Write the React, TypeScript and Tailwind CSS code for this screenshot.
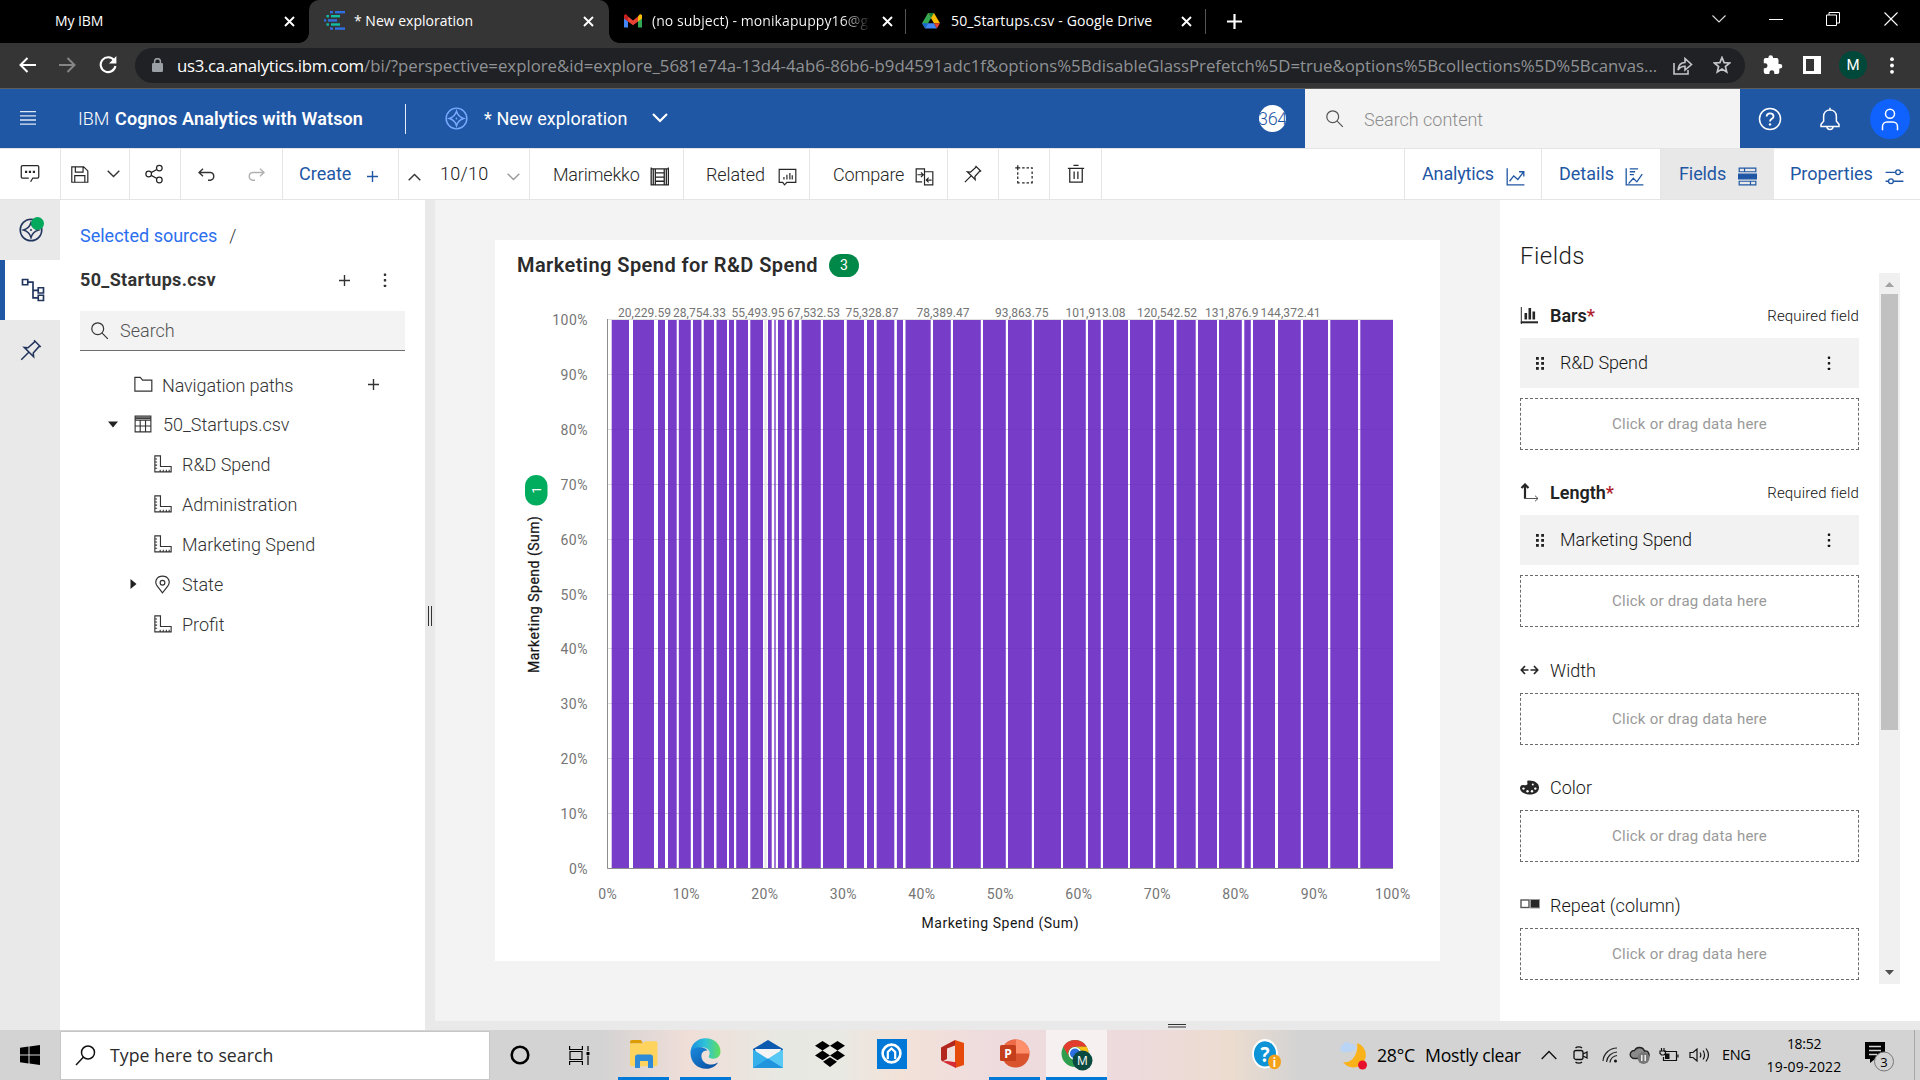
import type { ReactNode } from 'react';

type IconProps = { className?: string; size?: number; sw?: number; children: ReactNode };

function Icon({ className = '', size = 20, sw = 2, children }: IconProps) {
  return (
    <svg
      width={size}
      height={size}
      viewBox="0 0 32 32"
      fill="none"
      stroke="currentColor"
      strokeWidth={sw}
      className={`shrink-0 ${className}`}
    >
      {children}
    </svg>
  );
}

const CloseX = ({ className = '' }: { className?: string }) => (
  <svg width="11" height="11" viewBox="0 0 11 11" className={`shrink-0 ${className}`}>
    <path d="M1 1l9 9M10 1l-9 9" stroke="#fff" strokeWidth="1.9" />
  </svg>
);

const DiamondCircle = ({ size, sw = 2 }: { size: number; sw?: number }) => (
  <Icon size={size} sw={sw}>
    <circle cx="16" cy="16" r="14.4" />
    <path d="M16 6c1.6 5.6 4.4 8.400 10 10-5.600 1.600-8.400 4.400-10 10-1.600-5.600-4.400-8.400-10-10 5.600-1.600 8.400-4.400 10-10z" />
    <circle cx="16" cy="16" r="1.300" fill="currentColor" stroke="none" />
  </Icon>
);

const PinIcon = ({ size }: { size: number }) => (
  <Icon size={size}>
    <path d="M20 3l9 9M21.500 4.500L12 13l-5-.5 12.500 12.500-.5-5 8.500-9.500M7 12.500l12.500 12.500M13 19L3 29" />
  </Icon>
);

const SearchIcon = ({ size, sw = 2 }: { size: number; sw?: number }) => (
  <Icon size={size} sw={sw}>
    <circle cx="13" cy="13" r="10" />
    <path d="M20.500 20.500l9.500 9.500" />
  </Icon>
);

const Plus = ({ size = 11, sw = 1.3, className = '' }: { size?: number; sw?: number; className?: string }) => (
  <svg width={size} height={size} viewBox="0 0 11 11" className={`shrink-0 ${className}`}>
    <path d="M5.500 0v11M0 5.500h11" stroke="currentColor" strokeWidth={sw} />
  </svg>
);

const Dots = ({ className = '', r = 1.2 }: { className?: string; r?: number }) => (
  <svg width="4" height="14" viewBox="0 0 4 14" fill="currentColor" className={`shrink-0 ${className}`}>
    <rect x={2 - r} y={1.7 - r} width={2 * r} height={2 * r} rx=".6" />
    <rect x={2 - r} y={7.300 - r} width={2 * r} height={2 * r} rx=".6" />
    <rect x={2 - r} y={12.900 - r} width={2 * r} height={2 * r} rx=".6" />
  </svg>
);

function CognosFavicon() {
  return (
    <svg width="21" height="19" viewBox="0 0 21 19" className="shrink-0 -translate-y-px">
      <g fill="#2f6fe0">
        <rect x="6" y="0" width="3" height="2.400" /><rect x="11" y="0" width="10" height="2.400" />
        <rect x="0" y="8.200" width="2.200" height="2.400" /><rect x="4" y="8.200" width="9" height="2.400" />
        <rect x="6" y="16.400" width="3" height="2.400" /><rect x="11" y="16.400" width="10" height="2.400" />
      </g>
      <g fill="#10bfa6">
        <rect x="2.500" y="4" width="2.400" height="2.400" /><rect x="7" y="4" width="9" height="2.400" />
        <rect x="2.500" y="12.300" width="2.400" height="2.400" /><rect x="7" y="12.300" width="9" height="2.400" />
      </g>
    </svg>
  );
}

function Tabs() {
  return (
    <div className="flex h-[43px] bg-black font-['Open_Sans',sans-serif] text-[14px] leading-[40px] text-white">
      <div className="flex w-[309px] shrink-0 items-center pb-px pl-[55px]">
        <span className="w-[229px] tracking-[-0.1px]">My IBM</span>
        <CloseX />
      </div>
      <div className="relative flex w-[300px] shrink-0 items-center rounded-t-[10px] bg-[#353535] pb-px pl-[15px]">
        <div className="absolute bottom-0 left-[-10px] size-[10px] bg-[radial-gradient(circle_at_0_0,#000_9.5px,#353535_10px)]" />
        <div className="absolute right-[-10px] bottom-0 size-[10px] bg-[radial-gradient(circle_at_100%_0,#000_9.5px,#353535_10px)]" />
        <CognosFavicon />
        <span className="ml-[9px] w-[229px]">* New exploration</span>
        <CloseX />
      </div>
      <div className="flex w-[299px] shrink-0 items-center pb-px pl-[15px]">
        <svg width="18" height="14" viewBox="0 0 18 14" className="shrink-0">
          <path d="M0 2v11.500h4V5z" fill="#4285f4" />
          <path d="M14 5v8.500h4V2z" fill="#34a853" />
          <path d="M0 2v2.600l4 3V2.600L2.500.5A1.600 1.600 0 000 2z" fill="#c5221f" />
          <path d="M14 2.600v5l4-3V2A1.600 1.600 0 0015.500.5z" fill="#fbbc04" />
          <path d="M4 2.600v5l5 3.700 5-3.700v-5L9 6.400z" fill="#ea4335" />
        </svg>
        <span className="ml-[10px] w-[221px] overflow-hidden bg-[linear-gradient(90deg,#fff_86%,#0000_99%)] bg-clip-text tracking-[0.08px] whitespace-nowrap text-transparent">
          (no subject) - monikapuppy16@g
        </span>
        <CloseX className="ml-[9px]" />
        <div className="ml-[12px] h-[25px] w-px bg-[#555]" />
      </div>
      <div className="flex w-[299px] shrink-0 items-center pb-px pl-[14px]">
        <svg width="18" height="16" viewBox="0 0 18 16" className="shrink-0">
          <path d="M6 0h6L6.200 10 3.200 15.600 0 10.300z" fill="#34a853" />
          <path d="M6 0h6l6 10.300h-6z" fill="#fbbc04" />
          <path d="M6 0h6L9 5z" fill="#188038" />
          <path d="M0 10.300h6l-2.800 5.300z" fill="#1967d2" />
          <path d="M6 10.300h6l2.900 5.300H3.200z" fill="#4285f4" />
          <path d="M12 10.300h6l-3.100 5.300z" fill="#ea4335" />
        </svg>
        <span className="ml-[11px] w-[230px] tracking-[0.15px] whitespace-nowrap">50_Startups.csv - Google Drive</span>
        <CloseX />
        <div className="ml-[13px] h-[25px] w-px bg-[#555]" />
      </div>
      <Plus size={15} sw={1.6} className="mt-[14px] ml-[20px]" />
      <div className="mt-[12px] ml-auto flex h-[14px] items-center">
        <svg width="14" height="8" viewBox="0 0 14 8" className="mr-[43px]">
          <path d="M.5.5L7 7l6.500-6.500" fill="none" stroke="#ddd" strokeWidth="1.100" />
        </svg>
        <div className="mr-[43px] h-px w-[14px] bg-white" />
        <svg width="14" height="14" viewBox="0 0 14 14" className="mr-[44px]" fill="none" stroke="#fff">
          <path d="M.5 3h10v10.500H.5zM3 3V.5h10.500v10.500h-3" />
        </svg>
        <svg width="14" height="14" viewBox="0 0 14 14" className="mr-[22px]">
          <path d="M.5.5l13 13M13.500.5l-13 13" stroke="#fff" strokeWidth="1.100" />
        </svg>
      </div>
    </div>
  );
}

function AddressBar() {
  return (
    <div className="flex h-[46px] items-center border-b border-[#5c5c5c] bg-[#353535] pb-[1px]">
      <svg width="17" height="16" viewBox="0 0 17 16" className="ml-[19px] shrink-0">
        <path d="M17 8H2M8.500 1L1.500 8l7 7" fill="none" stroke="#fff" strokeWidth="2" />
      </svg>
      <svg width="17" height="16" viewBox="0 0 17 16" className="ml-[23px] shrink-0">
        <path d="M0 8h15M8.500 1l7 7-7 7" fill="none" stroke="#868686" strokeWidth="2" />
      </svg>
      <svg width="18" height="18" viewBox="0 0 18 18" className="ml-[23px] shrink-0">
        <path d="M15.200 4.500A7.400 7.400 0 1016.400 10" fill="none" stroke="#fff" strokeWidth="2.100" />
        <path d="M17.400 0v7.400H10z" fill="#fff" />
      </svg>
      <div className="ml-[18px] flex h-[35px] w-[1610px] shrink-0 items-center rounded-full bg-[#202124] pl-[17px] font-['Open_Sans',sans-serif] text-[16.800px] leading-[35px] whitespace-nowrap">
        <svg width="11" height="14" viewBox="0 0 11 14" className="shrink-0">
          <rect y="5" width="11" height="9" rx="1.300" fill="#9aa0a6" />
          <path d="M2.600 5.500V3.600a2.900 2.900 0 015.800 0v1.900" fill="none" stroke="#9aa0a6" strokeWidth="1.500" />
        </svg>
        <span className="ml-[14px] w-[187px] tracking-[-0.32px] text-white">us3.ca.analytics.ibm.com</span>
        <span className="w-[1305px] text-[#8f9296]">
          /bi/?perspective=explore&amp;id=explore_5681e74a-13d4-4ab6-86b6-b9d4591adc1f&amp;options%5BdisableGlassPrefetch%5D=true&amp;options%5Bcollections%5D%5Bcanvas...
        </span>
        <svg width="20" height="19" viewBox="0 0 20 19" className="ml-[4px] shrink-0" fill="none" stroke="#c4c7ca" strokeWidth="1.600">
          <path d="M1 7v11h14v-4M5 14c.5-5 3-7.500 7-7.500V2.500l6.500 6-6.500 5.500v-3.800c-3 0-5.200 1-7 3.800z" />
        </svg>
        <svg width="18" height="18" viewBox="0 0 18 18" className="ml-[20px] shrink-0">
          <path d="M9 1.500l2.100 5.100 5.500.4-4.200 3.500 1.300 5.400L9 13l-4.700 2.900 1.300-5.400L1.400 7l5.500-.4z" fill="none" stroke="#c4c7ca" strokeWidth="1.700" />
        </svg>
      </div>
      <svg width="20" height="20" viewBox="0 0 20 20" className="ml-[18px] shrink-0">
        <path d="M17 9h-1.500V5a2 2 0 00-2-2H10V2.500a2.300 2.300 0 00-4.600 0V3H2.500a1.700 1.700 0 00-1.700 1.700v3.600h1.300a2.400 2.400 0 010 4.900H.8v3.900a2 2 0 002 1.900h3.600v-1.300a2.400 2.400 0 014.900 0V19h3a2 2 0 002-2v-3.400H17A2.300 2.300 0 0017 9z" fill="#fff" />
      </svg>
      <div className="ml-[20px] h-[18px] w-[18px] shrink-0 border-y-[3px] border-r-[7px] border-l-[3px] border-white" />
      <div className="ml-[18px] flex size-[28px] shrink-0 items-center justify-center rounded-full bg-[#00493a] font-['Roboto',sans-serif] text-[15px] text-white">
        M
      </div>
      <svg width="4" height="17" viewBox="0 0 4 17" fill="#fff" className="ml-[23px] shrink-0">
        <circle cx="2" cy="2.200" r="1.900" /><circle cx="2" cy="8.500" r="1.900" /><circle cx="2" cy="14.800" r="1.900" />
      </svg>
    </div>
  );
}

function Header() {
  return (
    <header className="flex h-[59px] items-center bg-[#1f57a4] text-[18px] text-white">
      <svg width="16" height="14" viewBox="0 0 16 14" className="ml-[20px] shrink-0 -translate-y-px">
        <path d="M0 .7h16M0 4.800h16M0 9h16M0 13.200h16" stroke="#dfe8f5" strokeWidth="1.300" />
      </svg>
      <span className="ml-[42px] w-[37px] font-light">IBM</span>
      <span className="w-[290px] font-semibold tracking-[0.13px] whitespace-nowrap">Cognos Analytics with Watson</span>
      <div className="h-[30px] w-px bg-[#e4ecf6]" />
      <div className="ml-[39px] text-[#78a9ff]">
        <DiamondCircle size={23} />
      </div>
      <span className="ml-[16px] w-[168px] pb-px tracking-[0.1px] whitespace-nowrap">* New exploration</span>
      <svg width="16" height="10" viewBox="0 0 16 10" className="shrink-0 -translate-y-px">
        <path d="M1 1l7 7 7-7" fill="none" stroke="#fff" strokeWidth="2.200" />
      </svg>
      <div className="ml-[591px] flex size-[27px] shrink-0 items-center justify-center overflow-hidden rounded-full bg-white text-[18px] font-light tracking-[-0.3px] text-[#1f57a4]">
        364
      </div>
      <div className="ml-[19px] flex h-[59px] w-[435px] shrink-0 items-center bg-[#f3f3f3] pl-[20px] text-[#525252]">
        <SearchIcon size={19} />
        <span className="ml-[20px] pt-[2px] font-light text-[#8d8d8d]">Search content</span>
      </div>
      <div className="ml-[18px]">
        <Icon size={24}>
          <circle cx="16" cy="16" r="14" />
          <path d="M11.500 12.500a4.500 4 0 014.500-4c3 0 4.700 1.700 4.700 4 0 3.300-4.700 3.200-4.700 6.700" strokeWidth="2.400" />
          <circle cx="16" cy="23.200" r="1.600" fill="currentColor" stroke="none" />
        </Icon>
      </div>
      <div className="ml-[36px]">
        <Icon size={24}>
          <path d="M16 1v3M16 4c-5 0-8.500 3.500-8.500 8.500V19L4 23v3h24v-3l-3.500-4v-6.500C24.500 7.500 21 4 16 4zM12 26a4 4 0 008 0" />
        </Icon>
      </div>
      <div className="ml-[28px] flex size-[40px] shrink-0 items-center justify-center rounded-full bg-[#0f62fe]">
        <Icon size={24}>
          <circle cx="16" cy="9" r="6" />
          <path d="M6 31v-5a6 6 0 016-6h8a6 6 0 016 6v5" />
        </Icon>
      </div>
    </header>
  );
}

function Cell({ className, children }: { className: string; children?: ReactNode }) {
  return <div className={`flex h-full shrink-0 items-center border-r border-[#e5e5e5] ${className}`}>{children}</div>;
}

function Toolbar() {
  return (
    <div className="flex h-[52px] border-t border-b border-[#e5e5e5] bg-white text-[18px] font-light text-[#262626]">
      <Cell className="w-[61px] justify-center">
        <Icon size={20} className="-translate-y-px">
          <path d="M17 30l3.500-6H28a2 2 0 002-2V6a2 2 0 00-2-2H4a2 2 0 00-2 2v16a2 2 0 002 2h10" />
          <path d="M8 14h3.500M14.200 14h3.500M20.500 14H24" strokeWidth="3.600" />
        </Icon>
      </Cell>
      <Cell className="w-[69px] pl-[9px]">
        <Icon size={19}>
          <path d="M3 3h20l7 7v19H3zM9 3v9h13V3M8 29V18h17v11" />
        </Icon>
        <svg width="13" height="8" viewBox="0 0 13 8" className="ml-[18px]">
          <path d="M.7.7l5.800 5.800 5.800-5.800" fill="none" stroke="#333" strokeWidth="1.400" />
        </svg>
      </Cell>
      <Cell className="w-[51px] justify-center">
        <Icon size={20} className="-translate-x-px">
          <circle cx="24.500" cy="6.500" r="4.500" /><circle cx="24.500" cy="25.500" r="4.500" /><circle cx="7.500" cy="16" r="4.500" />
          <path d="M11.500 13.800l9-5M11.500 18.200l9 5" />
        </Icon>
      </Cell>
      <Cell className="w-[102px] pl-[17px]">
        <svg width="17" height="13" viewBox="0 0 17 13" fill="none" stroke="#333" strokeWidth="1.400">
          <path d="M5 .8L1 4.500l4 3.700M1 4.500h11.500a3.900 3.900 0 010 7.700H10" />
        </svg>
        <svg width="17" height="13" viewBox="0 0 17 13" fill="none" stroke="#b0b0b0" strokeWidth="1.400" className="ml-[33px]">
          <path d="M12 .8l4 3.700-4 3.700M16 4.500H4.500a3.900 3.900 0 000 7.700H7" />
        </svg>
      </Cell>
      <Cell className="w-[116px] pl-[16px] text-[#1f57a4]">
        <span className="w-[68px] pb-px font-normal">Create</span>
        <Plus className="mt-[5px]" sw={1.400} />
      </Cell>
      <Cell className="w-[131px] pl-[9px]">
        <svg width="13" height="8" viewBox="0 0 13 8" className="mt-[6px]">
          <path d="M.7 7.300l5.800-5.800 5.800 5.800" fill="none" stroke="#333" strokeWidth="1.400" />
        </svg>
        <span className="ml-[19px] w-[67px] pb-px tracking-[0.3px] text-[#161616]">10/10</span>
        <svg width="13" height="8" viewBox="0 0 13 8" className="mt-[6px]">
          <path d="M.7.7l5.800 5.800 5.800-5.800" fill="none" stroke="#999" strokeWidth="1.400" />
        </svg>
      </Cell>
      <Cell className="w-[154px] pl-[23px]">
        <span className="w-[97px] tracking-[-0.2px]">Marimekko</span>
        <Icon size={19} sw={2.200} className="mt-[4px]">
          <path d="M2 1v29h29V1M9 3v27M24 3v27M9 10h15M9 17h15M9 24h15M2 3h29M5.500 3v27M27.500 3v27" />
        </Icon>
      </Cell>
      <Cell className="w-[126px] pl-[22px]">
        <span className="w-[72px] tracking-[-0.1px]">Related</span>
        <Icon size={19} className="mt-[4px]">
          <path d="M2 4h28v22H15l-4 4-3-4H2zM10 21v-4M15 21v-8M20 21V10M24 21v-7" />
        </Icon>
      </Cell>
      <Cell className="w-[138px] pl-[23px]">
        <span className="w-[82px] tracking-[-0.2px]">Compare</span>
        <Icon size={19} className="mt-[4px]">
          <path d="M12 25H2V3h14v7M16 30V8h14v22zM16 10v20M4 13h10M10 9l4 4-4 4M28 22H19M23 18l-4 4 4 4" />
        </Icon>
      </Cell>
      <Cell className="w-[51px] justify-center"><PinIcon size={20} /></Cell>
      <Cell className="w-[51px] justify-center">
        <Icon size={20}>
          <path d="M6 2v8M2 6h8M13 6h4M20 6h4M27 6h2v2M6 13v4M6 20v4M6 27v3h3M13 30h4M20 30h4M27 30h2v-3M29 12v4M29 19v4" />
        </Icon>
      </Cell>
      <Cell className="w-[52px] justify-center">
        <Icon size={20}>
          <path d="M12 2h8M3 7h26M6 7v22h20V7M13 12v12M19 12v12" />
        </Icon>
      </Cell>
      <div className="flex-1 border-r border-[#e5e5e5]" />
      <Cell className="w-[137px] pl-[17px] text-[#1f57a4]">
        <span className="w-[84px] pb-px font-normal tracking-[-0.15px]">Analytics</span>
        <Icon size={19} sw={2.200} className="mt-[5px]">
          <path d="M2 2v28h29M6 24l7-9 7 6 9-12M22 8h8v8" />
        </Icon>
      </Cell>
      <Cell className="w-[119px] pl-[17px] text-[#1f57a4]">
        <span className="w-[66px] pb-px font-normal">Details</span>
        <Icon size={19} sw={2.200} className="mt-[5px]">
          <path d="M2 2v28h29M8 3h14M8 8h9M8 13h7M6 28l8-9 6 6 9-13" />
        </Icon>
      </Cell>
      <div className="flex w-[113px] shrink-0 items-center bg-[#e8e8e8] pl-[18px] text-[#1f57a4]">
        <span className="w-[59px] pb-px font-normal tracking-[-0.1px]">Fields</span>
        <Icon size={19} className="mt-[5px]">
          <path d="M2 2h28v6H2zM2 24h28v6H2zM11 2v6M21 24v6" />
          <path d="M1 12h30v8H1z" fill="currentColor" />
        </Icon>
      </div>
      <div className="flex w-[146px] shrink-0 items-center pl-[16px] text-[#1f57a4]">
        <span className="w-[95px] pb-px font-normal">Properties</span>
        <Icon size={19} sw={2.200} className="mt-[5px]">
          <path d="M1 9h17M26 9h5M1 24h5M14 24h17" />
          <circle cx="22" cy="9" r="4" /><circle cx="10" cy="24" r="4" />
        </Icon>
      </div>
    </div>
  );
}

function Rail() {
  return (
    <nav className="w-[60px] shrink-0 bg-[#e9e9e9] text-[#20345c]">
      <div className="relative flex h-[60px] items-center justify-center pl-[1px]">
        <DiamondCircle size={24} sw={2} />
        <div className="absolute top-[17px] left-[31px] size-[13px] rounded-full bg-[#00a95c]" />
      </div>
      <div className="flex h-[60px] items-center border-l-[5px] border-[#1f57a4] bg-white pl-[16px]">
        <Icon size={24} sw={2.200}>
          <path d="M2 2h7v7H2zM23 13h7v7h-7zM23 23h7v7h-7zM9 5.500h7v21h7M16 16.500h7" />
        </Icon>
      </div>
      <div className="flex h-[60px] items-center justify-center pl-[1px]">
        <PinIcon size={24} />
      </div>
    </nav>
  );
}

const Ruler = () => (
  <Icon size={18}>
    <path d="M1.500 1.500h10v19h19v9.500h-29zM1.500 7h4M1.500 12.500h4M1.500 18h4M1.500 23.500h4M11 30v-4M16.500 30v-4M22 30v-4M27 30v-4" />
  </Icon>
);

function Leaf({ label }: { label: string }) {
  return (
    <div className="flex h-[40px] items-center pl-[94px]">
      <Ruler />
      <span className="ml-[10px]">{label}</span>
    </div>
  );
}

function SourcePanel() {
  return (
    <section className="w-[365px] shrink-0 bg-white pt-[20px] text-[18px] text-[#333]">
      <div className="flex h-[30px] items-center pl-[20px]">
        <span className="text-[#2b6fee]">Selected sources</span>
        <span className="ml-[12px] font-light">/</span>
      </div>
      <div className="mt-[14px] flex h-[30px] items-center pl-[20px]">
        <span className="w-[259px] font-bold tracking-[0.33px]">50_Startups.csv</span>
        <Plus sw={1.400} className="mt-[2px]" />
        <Dots className="mt-[2px] ml-[33px]" />
      </div>
      <div className="mt-[17px] ml-[20px] flex h-[40px] w-[325px] items-center border-b border-[#6f6f6f] bg-[#f3f3f3] pl-[10px]">
        <SearchIcon size={19} />
        <span className="ml-[11px] font-light text-[#525252]">Search</span>
      </div>
      <div className="pt-[13px] font-light text-[#333]">
        <div className="flex h-[40px] items-center pl-[74px]">
          <Icon size={19}>
            <path d="M1.500 4h9l4 4.500h15.500v18.500H1.500z" />
          </Icon>
          <span className="ml-[9px] w-[206px] pt-[2px] tracking-[-0.12px]">Navigation paths</span>
          <Plus sw={1.400} />
        </div>
        <div className="flex h-[40px] items-center pl-[48px]">
          <svg width="10" height="7" viewBox="0 0 10 7"><path d="M0 .5h10L5 6.500z" fill="#222" /></svg>
          <Icon size={18} className="ml-[16px]">
            <path d="M2 2h28v28H2zM2 9h28M2 19.500h28M11 9v21M20.500 9v21" />
            <path d="M2 5.500h28" strokeWidth="3" />
          </Icon>
          <span className="ml-[11px]">50_Startups.csv</span>
        </div>
        <Leaf label="R&amp;D Spend" />
        <Leaf label="Administration" />
        <Leaf label="Marketing Spend" />
        <div className="flex h-[40px] items-center pl-[70px]">
          <svg width="7" height="10" viewBox="0 0 7 10"><path d="M.5 0v10l6-5z" fill="#222" /></svg>
          <Icon size={19} className="ml-[16px]">
            <path d="M16 30L7.500 19C1 10.500 7 2 16 2s15 8.500 8.500 17z" />
            <circle cx="16" cy="13" r="4" />
          </Icon>
          <span className="ml-[10px]">State</span>
        </div>
        <Leaf label="Profit" />
      </div>
    </section>
  );
}

const bars: [number, number][] = [
  [611.7, 629], [633, 654], [658, 665], [668, 676.7], [678.800, 690.8], [693, 701.500], [703.8, 714], [716.500, 727],
  [729, 734], [736.200, 748], [750.300, 763], [768, 771.7], [774.3, 775.7], [778, 784.500], [787, 791.800],
  [794.300, 799], [801.500, 820.8], [823, 844], [846.800, 864], [867, 874], [876.700, 894.300], [896.900, 903],
  [905.500, 930.7], [933, 950.8], [953, 980.8], [983, 1005.8], [1008, 1031.8], [1034, 1061], [1063, 1085.8],
  [1088, 1100.8], [1103, 1128], [1130, 1153], [1155.300, 1174], [1176.500, 1195.700], [1198, 1217], [1219, 1241.8],
  [1244.3, 1250.8], [1253, 1275], [1278, 1300.8], [1303, 1328], [1330.3, 1358], [1360.3, 1393],
];

const gridY = [319.5, 374.5, 429.5, 484.5, 539.5, 594.5, 648.5, 703.5, 758.5, 813.5, 868.5];

const topLabels: [string, number, number][] = [
  ['20,229.59', 618, 53], ['28,754.33', 673, 53], ['55,493.95', 731.500, 53], ['67,532.53', 787, 53],
  ['75,328.87', 845.500, 53], ['78,389.47', 916.500, 53], ['93,863.75', 995, 53.500], ['101,913.08', 1065.500, 60],
  ['120,542.52', 1137, 60], ['131,876.9', 1205, 53.500], ['144,372.41', 1260.500, 60],
];

function Chart() {
  return (
    <svg width="945" height="640" viewBox="495 321 945 640" overflow="visible" className="block font-['Roboto',sans-serif]">
      {gridY.map((y) => (
        <path key={y} d={`M607 ${y}H1393`} stroke="#e0e0e0" />
      ))}
      {bars.map(([a, b]) => (
        <rect key={a} x={a} y="320" width={b - a} height="548" fill="#783dc8" />
      ))}
      {gridY.slice(1, 10).map((y) => (
        <path key={y} d={`M611 ${y}H1393`} stroke="#4b1aa8" strokeOpacity=".1" />
      ))}
      <rect x="764.500" y="320" width="2" height="548" fill="#e4e4e4" />
      <path d="M607.500 319V868.500H1393" fill="none" stroke="#8d8d8d" />
      {topLabels.map(([t, x, w]) => (
        <text key={t} x={x} y="316.500" textLength={w} fontSize="12" fill="#757575">{t}</text>
      ))}
      {gridY.map((y, i) => (
        <text key={y} x="588" y={y + 5} textAnchor="end" fontSize="14" letterSpacing={0.5} fill="#757575">
          {`${100 - i * 10}%`}
        </text>
      ))}
      {gridY.map((_, i) => (
        <text key={i} x={607.800 + i * 78.500} y="899" textAnchor="middle" fontSize="14" letterSpacing=".45" fill="#757575">
          {`${i * 10}%`}
        </text>
      ))}
      <text x="921.500" y="928" textLength="157" fontSize="14" fill="#161616">Marketing Spend (Sum)</text>
      <text transform="translate(538.500 673) rotate(-90)" textLength="157" fontSize="14" fill="#161616" stroke="#161616" strokeWidth=".25">
        Marketing Spend (Sum)
      </text>
      <rect x="525" y="475" width="22.500" height="30.500" rx="11.200" fill="#00ad5f" />
      <text transform="translate(541 493.500) rotate(-90)" fontSize="12.500" fill="#fff">1</text>
    </svg>
  );
}

function Canvas() {
  return (
    <main className="flex w-[1065px] shrink-0 flex-col bg-[#f3f3f3] pt-[40px] pl-[60px]">
      <div className="h-[721px] w-[945px] bg-white">
        <div className="flex h-[81px] items-start pt-[14px] pl-[22px]">
          <h1 className="w-[312px] text-[20px] leading-[23px] font-semibold tracking-[0.43px] whitespace-nowrap text-[#2b2b2b]">
            Marketing Spend for R&amp;D Spend
          </h1>
          <span className="flex h-[23px] w-[30px] items-center justify-center rounded-full bg-[#008848] text-[14px] text-white">3</span>
        </div>
        <Chart />
      </div>
    </main>
  );
}

function DropZone() {
  return (
    <div className="flex h-[52px] w-[339px] items-center justify-center border border-dashed border-[#6b6b6b] text-[15px] tracking-[0.23px] text-[#999]">
      Click or drag data here
    </div>
  );
}

function FieldItem({ label }: { label: string }) {
  return (
    <div className="mb-[10px] flex h-[50px] w-[339px] items-center bg-[#f2f2f2] pl-[16px] text-[18px] font-light text-[#161616]">
      <svg width="8" height="13" viewBox="0 0 8 13" fill="#222" className="shrink-0">
        {[0, 5, 10].map((y) => (
          <g key={y}><rect y={y} width="2.800" height="2.800" /><rect x="5.200" y={y} width="2.800" height="2.800" /></g>
        ))}
      </svg>
      <span className="ml-[16px] w-[267px] pb-px tracking-[-0.08px]">{label}</span>
      <Dots />
    </div>
  );
}

function Slot({ icon, label, required, item, className }: { icon: ReactNode; label: string; required?: boolean; item?: string; className: string }) {
  return (
    <div className={className}>
      <div className="flex h-[46px] items-center">
        <div className="flex w-[30px] shrink-0">{icon}</div>
        {required ? (
          <>
            <span className="text-[18px] font-semibold text-[#222]">{label}<span className="text-[#b01f2b]">*</span></span>
            <span className="mt-[3px] ml-auto text-[15px] font-light tracking-[0.14px] text-[#111]">Required field</span>
          </>
        ) : (
          <span className="text-[18px] font-light text-[#161616]">{label}</span>
        )}
      </div>
      {item && <FieldItem label={item} />}
      <DropZone />
    </div>
  );
}

function FieldsPanel() {
  return (
    <aside className="flex w-[420px] shrink-0 bg-white pl-[20px]">
      <div className="w-[339px] shrink-0 pt-[41px]">
        <h2 className="h-[30px] text-[24px] leading-[31px] font-light tracking-[0.45px] text-[#1c1c1c]">Fields</h2>
        <Slot
          className="mt-[21px] h-[177px]"
          required
          label="Bars"
          item="R&amp;D Spend"
          icon={
            <svg width="18" height="17" viewBox="0 0 18 17" fill="#262626">
              <rect x=".8" width="1" height="17" /><rect x=".8" y="14.300" width="17.200" height="2" />
              <rect x="4.500" y="6" width="2.600" height="6.500" /><rect x="8.500" y="1" width="2.600" height="11.500" /><rect x="12.500" y="4.500" width="2.600" height="8" />
            </svg>
          }
        />
        <Slot
          className="h-[178px]"
          required
          label="Length"
          item="Marketing Spend"
          icon={
            <svg width="19" height="19" viewBox="0 0 19 19" fill="none" stroke="#262626">
              <path d="M5 16V2M1.500 5L5 1.500 8.500 5" strokeWidth="2.200" />
              <path d="M4 15.500h14M15 12.700l3 2.800-3 2.800" stroke="#555" />
            </svg>
          }
        />
        <Slot
          className="h-[117px]"
          label="Width"
          icon={
            <svg width="19" height="10" viewBox="0 0 19 10" fill="none" stroke="#262626" strokeWidth="1.700">
              <path d="M8.500 5H1.500M5 1L1.300 5 5 9M10.500 5h7M14 1l3.700 4L14 9" />
            </svg>
          }
        />
        <Slot
          className="h-[118px]"
          label="Color"
          icon={
            <svg width="19" height="15" viewBox="0 0 19 15">
              <path d="M8 .6C14 .2 19 3 19 7.500S15 14.500 10 14.500 0 12 0 8c0-2 1.500-3.500 3.500-3s4 .3 4-1.200C7.500 2.500 6.500 1.500 8 .6z" fill="#262626" />
              <circle cx="3.500" cy="8.600" r="1.200" fill="#fff" /><circle cx="7.500" cy="11.300" r="1.200" fill="#fff" /><circle cx="12" cy="11.200" r="1.200" fill="#fff" />
              <circle cx="15.300" cy="8.600" r="1.200" fill="#fff" /><circle cx="12.800" cy="4.500" r="1" fill="#fff" />
            </svg>
          }
        />
        <Slot
          className="h-[117px]"
          label="Repeat (column)"
          icon={
            <svg width="20" height="10" viewBox="0 0 20 10" className="-translate-y-px">
              <rect x="1" y="1" width="8" height="7.500" fill="#fff" stroke="#555" strokeWidth="1.400" />
              <rect x="10.500" y=".5" width="9" height="8.500" fill="#262626" stroke="#999" />
            </svg>
          }
        />
      </div>
      <div className="mt-[73px] ml-[20px] flex h-[711px] w-[21px] flex-col items-center bg-[#f0f0f0]">
        <svg width="9" height="5" viewBox="0 0 9 5" className="mt-[9px] shrink-0"><path d="M0 5L4.500 0 9 5z" fill="#a3a3a3" /></svg>
        <div className="mt-[7px] h-[436px] w-[17px] shrink-0 bg-[#c1c1c1]" />
        <svg width="9" height="5" viewBox="0 0 9 5" className="mt-auto mb-[9px] shrink-0"><path d="M0 0l4.500 5L9 0z" fill="#505050" /></svg>
      </div>
    </aside>
  );
}

function TaskSlot({ className, children }: { className: string; children: ReactNode }) {
  return <div className={`flex h-[50px] shrink-0 items-center justify-center border-b-[3px] ${className}`}>{children}</div>;
}

function Taskbar() {
  return (
    <footer className="flex h-[50px] items-center bg-[linear-gradient(90deg,#d3d3d3_0,#d3d3d3_600px,#f0ded8_690px,#e8e8e2_780px,#e9e9e3_840px,#f2e2d8_900px,#eddbde_1000px,#ecdadd_1130px,#ecdccf_1230px,#d3d3d3_1300px,#d3d3d3_1920px)] font-['Open_Sans',sans-serif] text-black">
      <svg width="21" height="20" viewBox="0 0 21 20" className="ml-[20px] shrink-0">
        <path d="M0 2.800l8.500-1.200V9.500H0zM9.500 1.400L20 0v9.500H9.500zM0 10.500h8.500v7.900L0 17.200zM9.500 10.500H20V20L9.500 18.600z" />
      </svg>
      <div className="ml-[19px] flex h-[49px] w-[430px] shrink-0 items-center self-end border border-[#c6c6c6] bg-white pl-[14px]">
        <svg width="21" height="21" viewBox="0 0 21 21" fill="none" stroke="#111" strokeWidth="1.500">
          <circle cx="13" cy="7.500" r="6.500" /><path d="M8.500 12L1 20" />
        </svg>
        <span className="ml-[14px] text-[17.700px] tracking-[0.03px] text-[#2b2b2b]">Type here to search</span>
      </div>
      <svg width="20" height="20" viewBox="0 0 20 20" className="ml-[20px] shrink-0">
        <circle cx="10" cy="10" r="8.300" fill="none" stroke="#000" strokeWidth="2.600" />
      </svg>
      <svg width="21" height="19" viewBox="0 0 21 19" className="ml-[39px] shrink-0" fill="none" stroke="#000" strokeWidth="1.200">
        <path d="M.6 0v3.500h12.800V0M1 5.500h12v8H1zM.6 19v-3.500h12.800V19M19 0v5M19 9.500V19" />
        <path d="M17.500 6h3v3h-3z" fill="#000" stroke="none" />
      </svg>
      <TaskSlot className="ml-[28px] w-[51px] border-[#0078d7]">
        <svg width="28" height="28" viewBox="0 0 28 24" preserveAspectRatio="none">
          <path d="M0 2a2 2 0 012-2h9l2 3H0z" fill="#dd9b06" />
          <path d="M0 3h13l2-2h11a1.500 1.500 0 011.500 1.500V21a1.500 1.500 0 01-1.500 1.500H1.500A1.500 1.500 0 010 21z" fill="#ffd45e" />
          <path d="M5 24v-9a2.500 2.500 0 012.500-2.500h13A2.500 2.500 0 0123 15v9h-5v-6h-8v6z" fill="#2f8ad8" />
        </svg>
      </TaskSlot>
      <TaskSlot className="ml-[11px] w-[51px] border-[#0078d7]">
        <svg width="31" height="31" viewBox="0 0 31 31">
          <defs>
            <linearGradient id="edgeTop" x1="0" x2="1"><stop offset="0" stopColor="#1a8fe0" /><stop offset=".5" stopColor="#2fc2d8" /><stop offset="1" stopColor="#62df58" /></linearGradient>
            <linearGradient id="edgeLow" x1="0" x2="1" y2="1"><stop offset="0" stopColor="#1b8be0" /><stop offset="1" stopColor="#0a4a9a" /></linearGradient>
          </defs>
          <path d="M.5 15C.5 6.500 7 .3 15.700.3 24 .3 30.500 6 30.500 13.500c0 4.500-3 7.200-7 7.200-3.500 0-4.800-1.200-4.800-2.200 0-.8 1-1.300 1-3.500 0-3-2.700-5.500-6.700-5.500C7 9.500.5 12 .5 15z" fill="url(#edgeTop)" />
          <path d="M.5 15c0-4 5.500-6.500 11.500-5.500 2.500.4 4.500 1.500 5.500 3-4-.5-6.500 2.500-6 6.500.6 5 5.500 8 10.500 7.500 2.500-.2 4.600-1.200 6-2-2.500 4-7 6.300-12 6.300C7 30.800.5 24 .5 15z" fill="url(#edgeLow)" />
        </svg>
      </TaskSlot>
      <TaskSlot className="ml-[11px] w-[51px] border-transparent">
        <svg width="30" height="28" viewBox="0 0 30 28">
          <path d="M0 9L15 0l15 9v5H0z" fill="#0c5ab0" />
          <path d="M2 9h26l-2 8-11 5L4 17z" fill="#f4f4f4" />
          <path d="M0 9.500l15 9.500 15-9.500V28H0z" fill="#35b0ea" />
          <path d="M15 19l15-9.500V28z" fill="#58c8f5" /><path d="M0 28h30L15 18.500z" fill="#2094dc" />
        </svg>
      </TaskSlot>
      <TaskSlot className="ml-[11px] w-[51px] border-transparent">
        <svg width="30" height="26" viewBox="0 0 30 26">
          <path d="M7.500 0L15 4.800 7.500 9.600 0 4.800zM22.500 0L30 4.800l-7.500 4.800L15 4.800zM7.500 9.600l7.500 4.800-7.500 4.800L0 14.400zM22.500 9.600l7.500 4.800-7.500 4.800-7.500-4.800zM15 16.200l7 4.600L15 26l-7-5.200z" />
        </svg>
      </TaskSlot>
      <TaskSlot className="ml-[11px] w-[51px] border-transparent">
        <div className="flex size-[30px] items-center justify-center bg-[#0078d7]">
          <svg width="21" height="21" viewBox="0 0 21 21">
            <circle cx="10.500" cy="10.500" r="8.900" fill="none" stroke="#fff" strokeWidth="2.600" />
            <path d="M6.800 16V9l3.700-3.500L14.200 9v7" fill="none" stroke="#fff" strokeWidth="2.200" />
          </svg>
        </div>
      </TaskSlot>
      <TaskSlot className="ml-[10px] w-[51px] border-transparent">
        <svg width="23" height="28" viewBox="0 0 23 28">
          <path d="M0 7.500L14 0v5.500L6 8.500V19l-4.500 2.500L0 20z" fill="#b3261e" />
          <path d="M14 0l9 3v22l-9 3z" fill="#e64a0b" />
          <path d="M1.500 21.500L6 21l9 1.200V28z" fill="#d52b35" />
        </svg>
      </TaskSlot>
      <TaskSlot className="ml-[11px] w-[51px] border-[#0078d7]">
        <svg width="30" height="29" viewBox="0 0 30 29">
          <circle cx="15.500" cy="14.500" r="14" fill="#d9532f" />
          <path d="M15.500.5a14 14 0 0114 14h-14z" fill="#ff8f6b" />
          <path d="M1.500 14.500a14 14 0 0114-14v14z" fill="#ed6c47" />
          <rect x="0" y="6" width="16" height="16" rx="1.500" fill="#c43e1c" />
          <text x="8" y="18.500" fontSize="12" fontWeight="700" fill="#fff" textAnchor="middle">P</text>
        </svg>
      </TaskSlot>
      <TaskSlot className="ml-[6px] w-[61px] border-[#0078d7] bg-[#f6f0f0]">
        <svg width="32" height="32" viewBox="0 0 32 32" className="mt-[3px]">
          <circle cx="14" cy="14.500" r="13.500" fill="#2f9e4f" />
          <path d="M2.300 7.700A13.500 13.500 0 0125.700 7.700H14a7 7 0 00-6.200 10z" fill="#e33b2e" />
          <path d="M25.700 7.700A13.500 13.500 0 0114 28l6-10a7 7 0 00-6-10.300z" fill="#fbc116" />
          <circle cx="14" cy="14.500" r="6.500" fill="#fff" /><circle cx="14" cy="14.500" r="5" fill="#2a6fe0" />
          <circle cx="21.500" cy="21.500" r="10" fill="#0b4a40" />
          <text x="21.500" y="26" fontSize="12" fill="#fff" textAnchor="middle">M</text>
        </svg>
      </TaskSlot>
      <svg width="30" height="32" viewBox="0 0 30 28" preserveAspectRatio="none" className="ml-[145px] shrink-0">
        <circle cx="13" cy="13" r="12" fill="#0d93d6" stroke="#fff" strokeWidth="1.800" />
        <text x="13" y="20" fontSize="19" fontWeight="700" fill="#fff" textAnchor="middle">?</text>
        <circle cx="22.500" cy="20" r="6.500" fill="#f5a21b" />
        <text x="22.500" y="24.200" fontSize="11" fontWeight="700" fill="#fff" textAnchor="middle">i</text>
      </svg>
      <svg width="30" height="29" viewBox="0 0 30 29" className="ml-[56px] shrink-0">
        <path d="M19 2a12.500 12.500 0 11-14 19C14 23 21 12 19 2z" fill="#f9b21a" />
        <path d="M4 11a4 4 0 01.5-7A5 5 0 0113 3a3.600 3.600 0 012 7c-2 1-8 1.500-11 1z" fill="#b9d4f5" />
        <circle cx="24.500" cy="24" r="4.500" fill="#e8112d" />
      </svg>
      <span className="ml-[9px] w-[48px] shrink-0 pt-px text-[17.700px] tracking-[-0.3px]">28°C</span>
      <span className="w-[116px] shrink-0 pt-px text-[17.700px] tracking-[-0.28px] whitespace-nowrap">Mostly clear</span>
      <svg width="16" height="10" viewBox="0 0 16 10" className="shrink-0"><path d="M.7 9L8 1.500 15.300 9" fill="none" stroke="#111" strokeWidth="1.400" /></svg>
      <svg width="15" height="18" viewBox="0 0 15 18" className="ml-[16px] shrink-0" fill="none" stroke="#111" strokeWidth="1.300">
        <rect x="1" y="4.500" width="9" height="9" rx="2" /><path d="M10 8l4-2v6l-4-2M2.500 2C4 .5 7.500.5 9 2M2.500 16c1.500 1.500 5 1.500 6.500 0" />
      </svg>
      <svg width="16" height="16" viewBox="0 0 16 16" className="ml-[14px] shrink-0" fill="none" stroke="#222" strokeWidth="1.200">
        <path d="M1 14A14 14 0 0115 1M4.500 15A11 11 0 0115 5M8 15.500A8 8 0 0115 8.500" /><circle cx="13.500" cy="14" r="1.500" fill="#111" stroke="none" />
      </svg>
      <svg width="21" height="18" viewBox="0 0 21 18" className="ml-[11px] shrink-0">
        <path d="M5 12.500a4 4 0 01.5-8A5.500 5.500 0 0115.500 5a3.800 3.800 0 012 7.300z" fill="#8a8a8a" stroke="#222" strokeWidth="1.400" />
        <circle cx="14.500" cy="12" r="6" fill="#777" /><path d="M12.800 9v6M16.200 9v6" stroke="#fff" strokeWidth="1.300" />
      </svg>
      <svg width="20" height="14" viewBox="0 0 20 14" className="ml-[9px] shrink-0" fill="none" stroke="#111" strokeWidth="1.200">
        <path d="M5 3.500h12.500v9H4.500V9M19 6.500v3M1 3h5.500v2.500L5 7H2.500L1 5.500zM2.500 3V0M5 3V0" /><rect x="6" y="5.500" width="4.500" height="5.500" fill="#111" stroke="none" />
      </svg>
      <svg width="21" height="16" viewBox="0 0 21 16" className="ml-[10px] shrink-0" fill="none" stroke="#111" strokeWidth="1.200">
        <path d="M1 5.500h3L8 2v12l-4-3.500H1zM11 5.500c1 1.500 1 3.500 0 5M14 3.500c2 2.500 2 6.500 0 9M17 1.500c3 4 3 9 0 13" />
      </svg>
      <span className="ml-[12px] w-[42px] shrink-0 text-[14.500px] tracking-[-0.3px]">ENG</span>
      <div className="flex w-[80px] shrink-0 flex-col items-center pb-px text-[14px] leading-[23px]">
        <span className="tracking-[-0.3px]">18:52</span>
        <span className="tracking-[0.2px]">19-09-2022</span>
      </div>
      <svg width="30" height="30" viewBox="0 0 30 30" className="mt-[4px] ml-[21px] shrink-0">
        <path d="M0 0h20v17H10l-5 4v-4H0z" fill="#000" /><path d="M4 4.500h12M4 8.500h12M4 12.500h8" stroke="#d3d3d3" strokeWidth="1.300" />
        <circle cx="19" cy="19.500" r="9.500" fill="#d3d3d3" stroke="#777" />
        <text x="19" y="24.500" fontSize="13" fill="#000" textAnchor="middle">3</text>
      </svg>
      <div className="mr-[5px] ml-auto h-[50px] w-px bg-[#a8a8a8]" />
    </footer>
  );
}

export default function App() {
  return (
    <div className="flex h-[1080px] w-[1920px] flex-col overflow-hidden bg-white font-['Roboto',sans-serif]">
      <Tabs />
      <AddressBar />
      <Header />
      <Toolbar />
      <div className="flex h-[830px]">
        <Rail />
        <SourcePanel />
        <div className="flex-1">
          <div className="flex h-[821px]">
            <div className="flex w-[10px] shrink-0 items-start gap-[2px] bg-[#e9e9e9] pt-[406px] pl-[3px]">
              <div className="h-[20px] w-px bg-[#333]" />
              <div className="h-[20px] w-px bg-[#333]" />
            </div>
            <Canvas />
            <FieldsPanel />
          </div>
          <div className="flex h-[9px] flex-col gap-px bg-[#e9e9e9] pt-[3px] pl-[743px]">
            <div className="h-px w-[18px] bg-[#333]" />
            <div className="h-[2px] w-[18px] bg-[#8d8d8d]" />
          </div>
        </div>
      </div>
      <Taskbar />
    </div>
  );
}
